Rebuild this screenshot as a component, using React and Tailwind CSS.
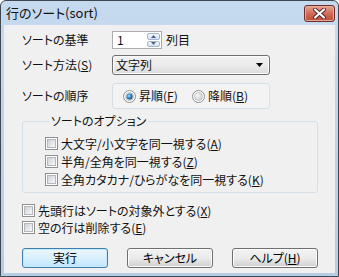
import React from "react";

const font = "font-['Noto_Sans_CJK_JP','Noto_Sans',sans-serif] [font-feature-settings:'palt']";

function Check({ label }) {
  return (
    <div className="flex items-center h-[17px] gap-[3px]">
      <span className="w-[13px] h-[13px] border border-[#8e8f8f] bg-white p-[1px] flex shrink-0">
        <span className="flex-1 border border-[#b4b8bd] bg-gradient-to-br from-[#cfd2d7] to-[#f7f7f7]" />
      </span>
      <span className="leading-[14px]">{label}</span>
    </div>
  );
}

function Radio({ checked }) {
  return (
    <svg width="13" height="13" viewBox="0 0 13 13" className="shrink-0">
      <defs>
        <radialGradient id="rg-off" cx="0.35" cy="0.35" r="0.7">
          <stop offset="0" stopColor="#f8f8f8" />
          <stop offset="1" stopColor="#c9cdd2" />
        </radialGradient>
        <radialGradient id="rg-on" cx="0.4" cy="0.4" r="0.6">
          <stop offset="0" stopColor="#a6e2ff" />
          <stop offset="0.6" stopColor="#2f85c6" />
          <stop offset="1" stopColor="#184f80" />
        </radialGradient>
      </defs>
      <circle cx="6.5" cy="6.5" r="6" fill="#fff" stroke="#8e8f8f" />
      <circle cx="6.5" cy="6.5" r="4" fill="url(#rg-off)" stroke="#b9bdc2" strokeWidth="0.8" />
      {checked && <circle cx="6.5" cy="6.5" r="3" fill="url(#rg-on)" />}
    </svg>
  );
}

function Btn({ children, primary }) {
  return (
    <button
      className={
        "w-[86px] h-[20px] rounded-[3px] border leading-[14px] text-black flex items-center justify-center " +
        (primary
          ? "border-[#3c7fb1] bg-gradient-to-b from-[#eaf6fd] via-[#d9f0fc] to-[#bee6fd] shadow-[inset_0_0_0_1px_#c9e9fb]"
          : "border-[#707070] bg-gradient-to-b from-[#f2f2f2] via-[#ebebeb] to-[#cfcfcf] shadow-[inset_0_0_0_1px_#fcfcfc]")
      }
    >
      {children}
    </button>
  );
}

export default function App() {
  return (
    <div className={"w-[339px] h-[277px] flex flex-col border border-[#3f4852] rounded-t-[6px] bg-gradient-to-b from-[#c6daef] to-[#b6cde6] text-[12px] text-[#111] " + font}>
      {/* title bar */}
      <div className="h-[24px] flex items-start justify-between pl-[5px] pr-[3px]">
        <span className="text-[13px] leading-[16px] mt-[4px]">行のソート(sort)</span>
        <div className="mt-[4px] w-[31px] h-[17px] rounded-[3px] border border-[#6d2c2c] bg-gradient-to-b from-[#e8a593] via-[#cf6b58] to-[#c04a34] flex items-center justify-center shadow-[inset_0_0_0_1px_#e9a99a]">
          <svg width="13" height="11" viewBox="0 0 13 11">
            <path d="M2 1.5 L11 9.5 M11 1.5 L2 9.5" stroke="#5a2020" strokeWidth="4" strokeLinecap="round" />
            <path d="M2 1.5 L11 9.5 M11 1.5 L2 9.5" stroke="#ffffff" strokeWidth="2.2" strokeLinecap="round" />
          </svg>
        </div>
      </div>

      {/* client area */}
      <div className="mx-[3px] h-[248px] bg-[#f0f0f0] pl-[18px] flex flex-col">
        <div className="mt-[6px] h-[18px] flex items-center">
          <span className="w-[90px] leading-[14px]">ソートの基準</span>
          <div className="w-[50px] h-[18px] flex border border-[#abadb3] bg-white">
            <span className="flex-1 pl-[4px] leading-[16px]">1</span>
            <div className="w-[15px] flex flex-col gap-px p-px">
              <div className="flex-1 rounded-[2px] border border-[#a4b8cd] bg-gradient-to-b from-[#f3f7fc] to-[#d6e3f1] flex items-center justify-center">
                <svg width="5" height="3" viewBox="0 0 5 3"><path d="M0 3 L2.5 0 L5 3 Z" fill="#4d6185" /></svg>
              </div>
              <div className="flex-1 rounded-[2px] border border-[#a4b8cd] bg-gradient-to-b from-[#f3f7fc] to-[#d6e3f1] flex items-center justify-center">
                <svg width="5" height="3" viewBox="0 0 5 3"><path d="M0 0 L2.5 3 L5 0 Z" fill="#4d6185" /></svg>
              </div>
            </div>
          </div>
          <span className="ml-[4px] leading-[14px]">列目</span>
        </div>

        <div className="mt-[6px] h-[20px] flex items-center">
          <span className="w-[90px] leading-[14px]">
            ソート方法(<span className="underline">S</span>)
          </span>
          <div className="w-[158px] h-[20px] rounded-[3px] border border-[#707070] bg-gradient-to-b from-[#f2f2f2] via-[#ebebeb] to-[#dcdcdc] flex items-center pl-[3px] pr-[6px] shadow-[inset_0_0_0_1px_#fbfbfb]">
            <span className="flex-1 leading-[14px]">文字列</span>
            <svg width="7" height="4" viewBox="0 0 7 4"><path d="M0 0 L7 0 L3.5 4 Z" fill="#000" /></svg>
          </div>
        </div>

        <div className="mt-[8px] h-[26px] flex items-center">
          <span className="w-[90px] leading-[14px]">ソートの順序</span>
          <div className="w-[158px] h-[26px] rounded-[3px] border border-[#d5dfe5] bg-[#f3f3f3] flex items-center pl-[10px]">
            <div className="flex items-center gap-[3px] w-[69px]">
              <Radio checked />
              <span className="leading-[14px]">
                昇順(<span className="underline">F</span>)
              </span>
            </div>
            <div className="flex items-center gap-[3px]">
              <Radio />
              <span className="leading-[14px]">
                降順(<span className="underline">B</span>)
              </span>
            </div>
          </div>
        </div>

        <fieldset className="mt-[5px] w-[296px] border border-[#d5dfe5] rounded-[3px] pl-[22px] pt-[7px] pb-[4px]">
          <legend className="ml-[4px] px-[2px] leading-[14px]">ソートのオプション</legend>
          <div className="flex flex-col gap-px">
            <Check label={<>大文字/小文字を同一視する(<span className="underline">A</span>)</>} />
            <Check label={<>半角/全角を同一視する(<span className="underline">Z</span>)</>} />
            <Check label={<>全角カタカナ/ひらがなを同一視する(<span className="underline">K</span>)</>} />
          </div>
        </fieldset>

        <div className="mt-[9px] flex flex-col">
          <Check label={<>先頭行はソートの対象外とする(<span className="underline">X</span>)</>} />
          <Check label={<>空の行は削除する(<span className="underline">E</span>)</>} />
        </div>

        <div className="mt-[12px] flex gap-[19px]">
          <Btn primary>実行</Btn>
          <Btn>キャンセル</Btn>
          <Btn>
            ヘルプ(<span className="underline">H</span>)
          </Btn>
        </div>
      </div>
    </div>
  );
}
